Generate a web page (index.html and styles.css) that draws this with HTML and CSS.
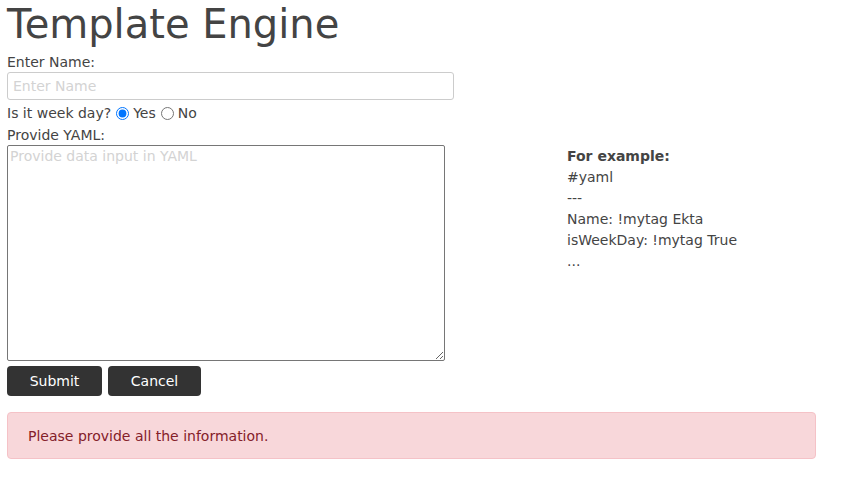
FILE: index.html
```html
<!DOCTYPE html>
<html>
<head>
<meta charset="utf-8">
<link rel="stylesheet" href="styles.css">
</head>
<body>
<div class="page">
  <h1 class="title">Template Engine</h1>
  <form class="form">
    <label class="label" for="name">Enter Name:</label>
    <input class="name-input" id="name" type="text" placeholder="Enter Name">
    <div class="radio-row">
      <span>Is it week day?</span>
      <label class="radio"><input type="radio" name="wd" checked> Yes</label>
      <label class="radio"><input type="radio" name="wd"> No</label>
    </div>
    <label class="label label-yaml" for="yaml">Provide YAML:</label>
    <div class="yaml-row">
      <textarea class="yaml" id="yaml" placeholder="Provide data input in YAML"></textarea>
      <div class="example">
        <div class="example-title">For example:</div>
        <div>#yaml</div>
        <div>---</div>
        <div>Name: !mytag Ekta</div>
        <div>isWeekDay: !mytag True</div>
        <div>...</div>
      </div>
    </div>
    <div class="buttons">
      <button type="button" class="btn btn-submit">Submit</button>
      <button type="button" class="btn btn-cancel">Cancel</button>
    </div>
  </form>
  <div class="alert">Please provide all the information.</div>
</div>
</body>
</html>
```
FILE: styles.css
```css
html, body {
  margin: 0;
  padding: 0;
  background: #fff;
}
body {
  font-family: "DejaVu Sans", Verdana, sans-serif;
  font-size: 14px;
  color: #444;
}
.page {
  padding: 0 7px;
  width: 809px;
}
.title {
  margin: 0;
  font-size: 40px;
  font-weight: normal;
  line-height: 48px;
  color: #444;
}
.form {
  display: flex;
  flex-direction: column;
  align-items: flex-start;
}
.label {
  display: block;
  line-height: 20px;
  margin-top: 4px;
}
.label-yaml {
  margin-top: 2px;
}
.name-input {
  box-sizing: border-box;
  width: 447px;
  height: 28px;
  border: 1px solid #ccc;
  border-radius: 3px;
  padding: 2px 5px;
  font-family: inherit;
  font-size: 14px;
  color: #444;
  margin: 0;
}
.name-input::placeholder, .yaml::placeholder {
  color: #d3d3d3;
}
.radio-row {
  display: flex;
  align-items: center;
  line-height: 20px;
  margin-top: 3px;
  gap: 5px;
}
.radio {
  display: flex;
  align-items: center;
}
.radio input {
  margin: 0 4px 0 0;
}
.yaml-row {
  display: flex;
  align-items: flex-start;
}
.yaml {
  box-sizing: border-box;
  width: 438px;
  height: 216px;
  border: 1px solid #767676;
  border-radius: 2px;
  padding: 2px 2px;
  font-family: inherit;
  font-size: 14px;
  margin: 0;
  resize: vertical;
}
.example {
  margin-left: 122px;
  margin-top: 1px;
  line-height: 21px;
}
.example-title {
  font-weight: bold;
}
.buttons {
  display: flex;
  gap: 6px;
  margin-top: 5px;
}
.btn {
  height: 30px;
  background: #333;
  color: #fff;
  border: none;
  border-radius: 4px;
  font-family: inherit;
  font-size: 14px;
  padding: 0;
  cursor: pointer;
}
.btn-submit { width: 95px; }
.btn-cancel { width: 93px; }
.alert {
  margin-top: 16px;
  box-sizing: border-box;
  height: 47px;
  background: #f8d7da;
  border: 1px solid #f5c2c7;
  border-radius: 4px;
  color: #842029;
  padding: 0 20px;
  display: flex;
  align-items: center;
}
```
